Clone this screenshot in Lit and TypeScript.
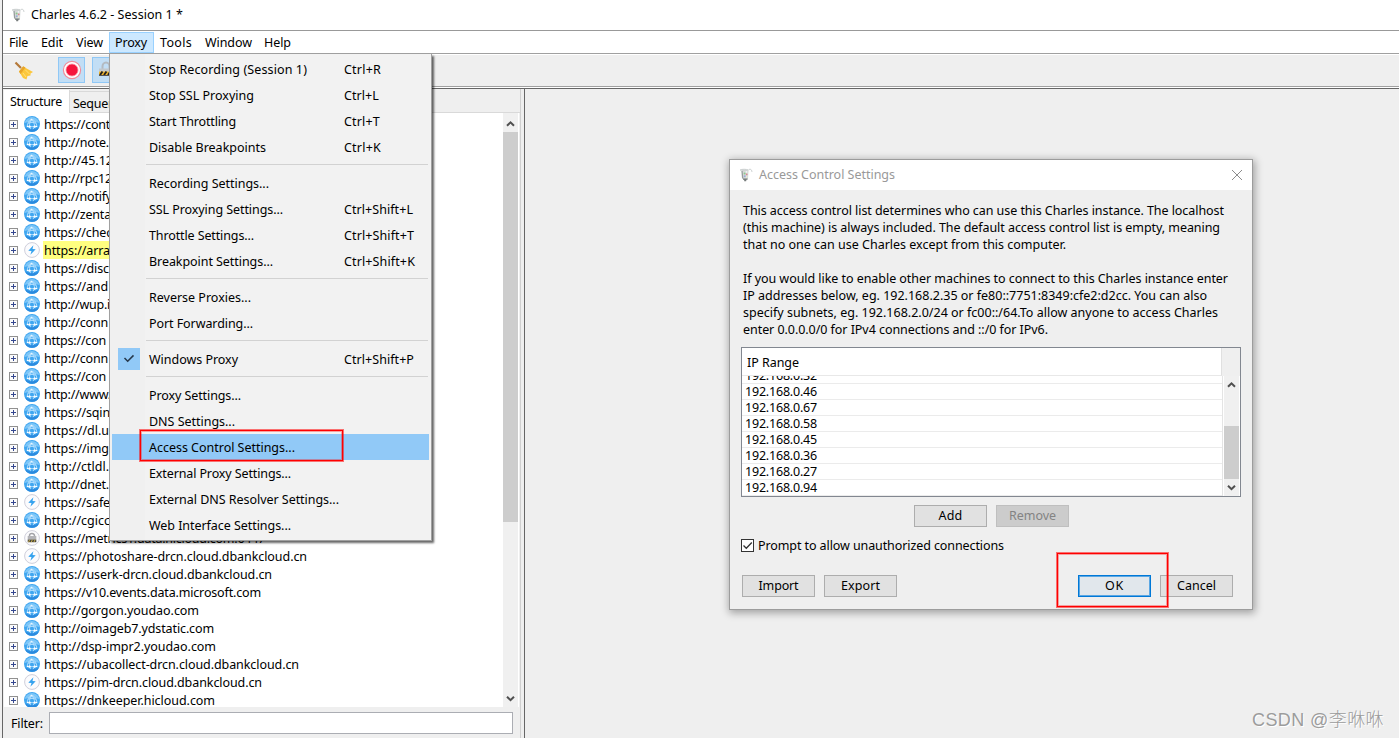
import { LitElement, html, css, svg, nothing } from "lit";
import { customElement, property } from "lit/decorators.js";

/** A single line of text spaced out to a given width. */
@customElement("fit-text")
class FitText extends LitElement {
  static styles = css`
    :host { display: inline-block; white-space: pre; }
  `;
  @property() text = "";
  @property({ type: Number }) w = 0;
  render() {
    return html`<span>${this.text}</span>`;
  }
  updated() {
    if (!this.w) return;
    this.style.letterSpacing = "0px";
    const span = this.renderRoot.querySelector("span")!;
    const natural = span.getBoundingClientRect().width;
    this.style.letterSpacing = `${(this.w - natural) / this.text.length}px`;
  }
}

const t = (text: string, w = 0) => html`<fit-text .text=${text} .w=${w}></fit-text>`;

const globe = svg`
  <circle cx="8" cy="8" r="8" fill="#3fa6f0"/>
  <path d="M0.6 7a7.5 7.2 0 0 1 14.8 0Q8 4 0.600 7Z" fill="#7cc6f8"/>
  <path d="M1 11.500A7.800 7.800 0 0 0 15 11.500Q8 14.500 1 11.500Z" fill="#2a8ade"/>
  <path d="M3.200 10.600C3.400 7.500 4.800 4.500 7.500 3.400C10.500 3.800 12.500 6.500 12.900 10.600M3.200 10.600h9.700M7.500 3.400C9.500 5 10.500 7.500 10.600 10.600M5.600 10.500C5.400 7.500 6 5 7.500 3.400M4.200 7.200C6.500 6.200 9.500 6.200 12 7.200M5.600 10.600l1 2.600M10.600 10.600l-1.600 2.600" fill="none" stroke="#c4e6ff" stroke-width="0.8"/>
  <circle cx="5.500" cy="10.600" r="1.200" fill="#fff"/><circle cx="10.700" cy="10.600" r="1.200" fill="#fff"/><circle cx="7.500" cy="3.600" r="0.9" fill="#e9f6ff"/><circle cx="3.500" cy="10.400" r="0.700" fill="#fff"/><circle cx="12.600" cy="10.400" r="0.700" fill="#fff"/>`;
const bolt = svg`
  <circle cx="8" cy="8" r="7.400" fill="#fbfbfd" stroke="#cfcfdb"/>
  <path d="M9.400 3.300L4.300 8.700L7.500 8.900L6.400 12.700L11.700 7.300L8.500 7.100Z" fill="#35a2ee"/>`;
const lockHost = svg`
  <circle cx="8" cy="8" r="7.400" fill="#fbfbfd" stroke="#cfcfdb"/>
  <path d="M5.500 8V5.500a2.500 2 0 0 1 5 0V8" fill="none" stroke="#a3a3a8" stroke-width="1.500"/>
  <rect x="3.700" y="6" width="8.600" height="4" fill="#b3b3b7"/>
  <rect x="3.700" y="9.700" width="8.600" height="2.500" fill="#4a483e"/>
  <path d="M4.500 12.200l1.200-2.500M7.200 12.200l1.200-2.500M9.900 12.200l1.200-2.500" stroke="#c9ad4a" stroke-width="1"/>`;
const icons: Record<string, unknown> = { g: globe, b: bolt, l: lockHost };

const pitcher = html`<svg class="pitcher" width="16" height="16" viewBox="0 0 16 16">
  <path d="M4 3.500h6.500l-.5 8-1.500 2h-2l-2-2z" fill="#d5d9d8"/>
  <path d="M2 3C4 2 8 2 10.500 3l1.500-1 1.500 1 .5 2" fill="none" stroke="#d0d4d4" stroke-width="1"/>
  <path d="M2.300 3.200h7.500" stroke="#b9bebe" stroke-width=".8"/>
  <path d="M4 4l.7 7.500" stroke="#969c9c" stroke-width="1.300"/>
  <path d="M5 12.200h4.500M6.200 13.500h2" stroke="#777c7c" stroke-width="1.300"/>
  <circle cx="6.600" cy="6.500" r="1" fill="#8fc98d"/><circle cx="8.700" cy="7.300" r=".9" fill="#dd8790"/>
  <circle cx="6.800" cy="9.300" r="1" fill="#9aabd9"/><circle cx="8.500" cy="4.900" r=".9" fill="#f2f5f6"/><circle cx="8.500" cy="10" r=".8" fill="#eef0d2"/>
</svg>`;

const chev = (up: boolean) => html`<svg width="15" height="17" viewBox="0 0 15 17">
  <path d=${up ? "M4 10.800L7.500 7.300L11 10.800" : "M4 6.700L7.500 10.200L11 6.700"} fill="none" stroke="#505050" stroke-width="2"/></svg>`;

const HOSTS: [string, string, number][] = [
  ["g", "https://cont", 66],
  ["g", "http://note.", 65],
  ["g", "http://45.12", 69],
  ["g", "http://rpc12", 68],
  ["g", "http://notify", 68],
  ["g", "http://zenta", 67],
  ["g", "https://chec", 68],
  ["b", "https://arra", 66],
  ["g", "https://disc", 65],
  ["g", "https://and", 64],
  ["g", "http://wup.i", 66],
  ["g", "http://conn", 64],
  ["g", "https://con", 62],
  ["g", "http://conn", 64],
  ["g", "https://con", 62],
  ["g", "http://www.", 67],
  ["g", "https://sqin", 66],
  ["g", "https://dl.u", 65],
  ["g", "https://img", 65],
  ["g", "http://ctldl.", 65],
  ["g", "http://dnet.", 65],
  ["b", "https://safe", 66],
  ["g", "http://cgicc", 66],
  ["l", "https://metrics1.data.hicloud.com:6447", 221],
  ["b", "https://photoshare-drcn.cloud.dbankcloud.cn", 263],
  ["g", "https://userk-drcn.cloud.dbankcloud.cn", 228],
  ["g", "https://v10.events.data.microsoft.com", 217],
  ["g", "http://gorgon.youdao.com", 155],
  ["g", "http://oimageb7.ydstatic.com", 170],
  ["g", "http://dsp-impr2.youdao.com", 172],
  ["g", "https://ubacollect-drcn.cloud.dbankcloud.cn", 255],
  ["b", "https://pim-drcn.cloud.dbankcloud.cn", 218],
  ["g", "https://dnkeeper.hicloud.com", 171],
];

type Item = [string, number, string?, number?] | null;
const MENU: Item[] = [
  ["Stop Recording (Session 1)", 158, "Ctrl+R", 37],
  ["Stop SSL Proxying", 105, "Ctrl+L", 35],
  ["Start Throttling", 87, "Ctrl+T", 36],
  ["Disable Breakpoints", 117, "Ctrl+K", 37],
  null,
  ["Recording Settings...", 120],
  ["SSL Proxying Settings...", 134, "Ctrl+Shift+L", 69],
  ["Throttle Settings...", 105, "Ctrl+Shift+T", 70],
  ["Breakpoint Settings...", 124, "Ctrl+Shift+K", 71],
  null,
  ["Reverse Proxies...", 102],
  ["Port Forwarding...", 104],
  null,
  ["Windows Proxy", 89, "Ctrl+Shift+P", 70],
  null,
  ["Proxy Settings...", 92],
  ["DNS Settings...", 86],
  ["Access Control Settings...", 146],
  ["External Proxy Settings...", 142],
  ["External DNS Resolver Settings...", 190],
  ["Web Interface Settings...", 142],
];

const PARAGRAPH: [string, number][] = [
  ["This access control list determines who can use this Charles instance. The localhost", 481],
  ["(this machine) is always included. The default access control list is empty, meaning", 477],
  ["that no one can use Charles except from this computer.", 323],
  [" ", 0],
  ["If you would like to enable other machines to connect to this Charles instance enter", 485],
  ["IP addresses below, eg. 192.168.2.35 or fe80::7751:8349:cfe2:d2cc. You can also", 464],
  ["specify subnets, eg. 192.168.2.0/24 or fc00::/64.To allow anyone to access Charles", 475],
  ["enter 0.0.0.0/0 for IPv4 connections and ::/0 for IPv6.", 305],
];
const IPS = ["32", "46", "67", "58", "45", "36", "27", "94"];

@customElement("app-root")
class AppRoot extends LitElement {
  static styles = css`
    :host { display: block; width: 1399px; height: 738px; position: relative; overflow: hidden;
      background: #efefef; color: #000; font: 12.5px/17px "Noto Sans", "Noto Sans CJK SC", sans-serif; }
    * { box-sizing: border-box; }
    svg { display: block; flex: none; }
    .window { display: flex; flex-direction: column; height: 738px; border-left: 1px solid #666; margin-left: 2px; }
    .title { height: 30px; background: #fff; display: flex; align-items: center; padding: 0 0 1px 7px; gap: 5px; }
    .menubar { height: 24px; background: #fff; border-top: 1px solid #999; border-bottom: 1px solid #a0a0a0;
      display: flex; padding: 0; flex: none; }
    .mb { height: 21px; margin-top: 1px; display: flex; align-items: center; border: 1px solid transparent; padding: 0 0 0 5px; flex: none; }
    .mb.on { background: #cce8ff; border-color: #99d1ff; }
    .m-File { width: 31px; } .m-Edit { width: 36px; padding-left: 6px; } .m-View { width: 39px; padding-left: 5px; }
    .m-Proxy { width: 45px; } .m-Tools { width: 46px; } .m-Window { width: 58px; padding-left: 4px; } .m-Help { width: 40px; padding-left: 5px; }
    .tools { height: 33px; flex: none; border-top: 1px solid #fff; border-bottom: 1px solid #a0a0a0; display: flex; gap: 7px; align-items: flex-start; padding: 2px 0 0 11px; }
    .tb { width: 27px; height: 26px; background: #c2def5; border: 1px solid #90c8f6; display: grid; place-items: center; }
    .broom { margin: 4px 17px 0 0; }
    .main { flex: 1; min-height: 0; display: flex; border-top: 1px solid #666; margin-top: 1px; box-shadow: 0 -1px #fff; }
    .left { width: 522px; flex: none; border-right: 1px solid #666; display: flex; flex-direction: column; box-shadow: inset -3px 0 #efefef, inset -4px 0 #d0d0d0; }
    .tabs { height: 24px; flex: none; display: flex; align-items: flex-end; padding-left: 1px; }
    .tab.act { width: 66px; height: 23px; background: #fff; padding-top: 3px; border-right: 1px solid #d9d9d9; padding-left: 6px; }
    .tab.off { width: 70px; height: 22px; border: 1px solid #d9d9d9; border-left: 0; padding: 3px 0 0 3px; }
    .fill { flex: 1; border-bottom: 1px solid #d9d9d9; height: 10px; margin-right: 4px; }
    .listbox { height: 594px; flex: none; display: flex; margin: 0 5px 0 1px; padding-left: 1px; background: #fff; }
    .list { flex: 1; overflow: hidden; padding: 2px 0 0 4px; }
    .row { display: flex; height: 18px; align-items: center; }
    .plus { width: 9px; height: 9px; margin-right: 6px; }
    .host { margin-left: 3px; height: 18px; padding: 1px 1px 0; }
    .host.hl { background: #ffff80; }
    .sb { width: 15px; background: #f0f0f0; display: flex; flex-direction: column; }
    .main .sb { padding-top: 2px; margin-right: 1px; }
    .thumb { background: #cdcdcd; }
    .t1 { height: 390px; } .grow { flex: 1; }
    .filter { flex: 1; display: flex; align-items: center; padding: 0 10px 0 8px; }
    .filter fit-text { padding-top: 2px; }
    .filter .in { height: 22px; width: 464px; border: 1px solid #abadb3; background: #fff; margin-left: 6px; }

    .menu { position: absolute; left: 109px; top: 54px; width: 323px; height: 487px; border: 1px solid #a0a0a0; border-top: 0;
      background: linear-gradient(90deg, #f0f0f0 35px, #f2f2f2 35px); padding: 2px 2px; box-shadow: 2px 2px 2px #0009; }
    .it { height: 26px; display: flex; align-items: center; }
    .it.sel { background: #91c9f7; }
    .it .ck { width: 22px; height: 22px; margin: 0 9px 0 6px; flex: none; }
    .it .ck.on { background: #91c9f7; }
    .it .lab { width: 195px; flex: none; }
    .sep { height: 10px; margin-left: 34px; margin-right: 1px; padding-top: 4px; }
    .sep i { display: block; height: 1px; background: #d2d2d2; }

    .dlg { position: absolute; left: 729px; top: 159px; width: 524px; height: 451px; border: 1px solid #9c9c9c; background: #efefef;
      box-shadow: 1px 2px 8px 1px #0005; display: flex; flex-direction: column; }
    .dt { height: 30px; background: #fff; color: #999; display: flex; align-items: center; padding: 0 9px 1px 8px; gap: 5px; }
    .dt .grow { flex: 1; }
    .dbody { padding: 12px 11px 0; display: flex; flex-direction: column; }
    .p { padding-left: 2px; display: flex; flex-direction: column; height: 145px; }
    .p fit-text { height: 17px; }
    .table { width: 500px; height: 150px; border: 1px solid #828790; background: #fff; }
    .th { height: 28px; display: flex; }
    .th div:first-child { width: 480px; border-right: 1px solid #e0e0e0; border-bottom: 1px solid #e8e8e8; padding: 6px 0 0 5px; }
    .th div:last-child { flex: 1; background: #efefef; }
    .tbd { display: flex; height: 120px; }
    .trs { width: 481px; overflow: hidden; border-right: 1px solid #e4e4e4; margin-right: 1px; display: flex; flex-direction: column; justify-content: flex-end; }
    .tr { height: 16px; border-bottom: 1px solid #ebebeb; line-height: 16px; padding-left: 3px; flex: none; }
    .tr fit-text { height: 15px; line-height: 16px; }
    .t2 { height: 53px; margin-top: 33px; }
    .btns { display: flex; gap: 9px; }
    .c { padding: 8px 0 0 173px; }
    .b { width: 73px; height: 22px; border: 1px solid #adadad; background: #e1e1e1; display: grid; place-items: center; padding-bottom: 1px; }
    .b.dis { background: #ccc; border-color: #bfbfbf; color: #838383; }
    .b.ok { border: 1px solid #0078d7; box-shadow: inset 0 0 0 1px #5ba7e3; background: #e1e7ec; margin-left: 172px; }
    .chk { display: flex; align-items: center; gap: 4px; height: 17px; margin-top: 10px; }
    .foot { padding: 21px 0 0 1px; }
    .red { position: absolute; border: 1px solid #f00; box-shadow: 0 0 0 1px #f008, inset 0 0 0 1px #f005; }
    .r1 { left: 140px; top: 430px; width: 203px; height: 31px; }
    .r2 { left: 1057px; top: 553px; width: 111px; height: 54px; }
    .wm { position: absolute; left: 1252px; top: 707px; font: 300 18px/26px "Liberation Sans", "Noto Sans CJK SC", sans-serif; color: #9c9c9c; text-shadow: 1px 1px #fff; }
  `;

  render() {
    const bars: [string, number][] = [["File", 19], ["Edit", 22], ["View", 27], ["Proxy", 32], ["Tools", 32], ["Window", 47], ["Help", 27]];
    return html`
      <div class="window">
        <div class="title">${pitcher}${t("Charles 4.6.2 - Session 1 *", 152)}</div>
        <div class="menubar">${bars.map(([s, w]) => html`<div class="mb m-${s} ${s === "Proxy" ? "on" : ""}">${t(s, w)}</div>`)}</div>
        <div class="tools">
          <svg class="broom" width="20" height="20" viewBox="0 0 20 20">
            <path d="M1.500 1.500L7 7" stroke="#b5793a" stroke-width="2.200"/>
            <path d="M5 10.500L9 5.500L19 11L16.500 12.500L16.500 14.500L13.500 15L12.500 18.500L9 17Z" fill="#fcc73c"/>
            <path d="M5 10.500L9.200 5.300L11.500 6.600L6.500 13Z" fill="#e8a52a"/>
            <path d="M9 12l3 4M11.500 9l4 4" stroke="#ffe07a" stroke-width="1"/>
          </svg>
          <div class="tb"><svg width="20" height="20" viewBox="0 0 20 20"><circle cx="10" cy="10" r="8.600" fill="#fff" stroke="#ef8e9c" stroke-width="1.200"/><circle cx="10" cy="10" r="6" fill="#f5153c"/><circle cx="10" cy="10" r="6" fill="none" stroke="#f8899b" stroke-width=".8"/></svg></div>
          <div class="tb"><svg width="20" height="20" viewBox="0 0 20 20"><path d="M6.500 10V6.500a3.500 4 0 0 1 7 0V10" fill="none" stroke="#b3bac1" stroke-width="2"/><rect x="3" y="8.500" width="14" height="3" fill="#c3c8cc"/><rect x="3" y="11.500" width="14" height="3.500" fill="#f3b72c"/><path d="M4 15l2.500-3.500M8 15l2.500-3.500M12 15l2.500-3.500" stroke="#222" stroke-width="2"/><path d="M3 15.500h14" stroke="#555"/></svg></div>
        </div>
        <div class="main">
          <div class="left">
            <div class="tabs">
              <div class="tab act">${t("Structure", 52)}</div>
              <div class="tab off">${t("Sequence", 55)}</div>
              <div class="fill"></div>
            </div>
            <div class="listbox">
              <div class="list">${HOSTS.map(([k, s, w]) => html`<div class="row">
                <svg class="plus" viewBox="0 0 9 9"><rect x=".5" y=".5" width="8" height="8" fill="#fbfbfb" stroke="#919191"/><path d="M2 4.500h5M4.500 2v5" stroke="#34478f"/></svg>
                <svg width="16" height="16" viewBox="0 0 16 16">${icons[k]}</svg>
                <div class="host ${s.startsWith("https://arra") ? "hl" : ""}">${t(s, w)}</div>
              </div>`)}</div>
              <div class="sb">${chev(true)}<div class="thumb t1"></div><div class="grow"></div>${chev(false)}</div>
            </div>
            <div class="filter">${t("Filter:", 32)}<div class="in"></div></div>
          </div>
        </div>
      </div>
      <div class="menu">${MENU.map((m) => m === null
        ? html`<div class="sep"><i></i></div>`
        : html`<div class="it ${m[0].startsWith("Access") ? "sel" : ""}">
            <div class="ck ${m[0] === "Windows Proxy" ? "on" : ""}">${m[0] === "Windows Proxy"
              ? html`<svg width="22" height="22" viewBox="0 0 22 22"><path d="M6.500 10l3.200 3.200L15.500 7.400" fill="none" stroke="#26384a" stroke-width="1.500"/></svg>` : nothing}</div>
            <div class="lab">${t(m[0], m[1])}</div>${m[2] ? t(m[2], m[3]) : nothing}
          </div>`)}</div>
      <div class="red r1"></div>
      <div class="dlg">
        <div class="dt">${pitcher}${t("Access Control Settings", 136)}<div class="grow"></div>
          <svg width="12" height="12" viewBox="0 0 12 12"><path d="M1 1l10 10M11 1L1 11" stroke="#8c8c8c" stroke-width="1"/></svg></div>
        <div class="dbody">
          <div class="p">${PARAGRAPH.map(([s, w]) => t(s, w))}</div>
          <div class="table">
            <div class="th"><div>${t("IP Range", 52)}</div><div></div></div>
            <div class="tbd">
              <div class="trs">${IPS.map((n) => html`<div class="tr">${t("192.168.0." + n, 72)}</div>`)}</div>
              <div class="sb">${chev(true)}<div class="thumb t2"></div>${chev(false)}</div>
            </div>
          </div>
          <div class="btns c"><div class="b">${t("Add", 24)}</div><div class="b dis">${t("Remove", 47)}</div></div>
          <div class="chk"><svg width="13" height="13" viewBox="0 0 13 13"><rect x=".5" y=".5" width="12" height="12" fill="#fff" stroke="#333"/><path d="M2.500 6.500l2.800 2.800L10.800 3.500" fill="none" stroke="#333" stroke-width="1.300"/></svg>${t("Prompt to allow unauthorized connections", 246)}</div>
          <div class="btns foot"><div class="b">${t("Import", 40)}</div><div class="b">${t("Export", 39)}</div><div class="b ok">${t("OK", 19)}</div><div class="b">${t("Cancel", 39)}</div></div>
        </div>
      </div>
      <div class="red r2"></div>
      <div class="wm">${t("CSDN @李咻咻", 132)}</div>
    `;
  }
}
